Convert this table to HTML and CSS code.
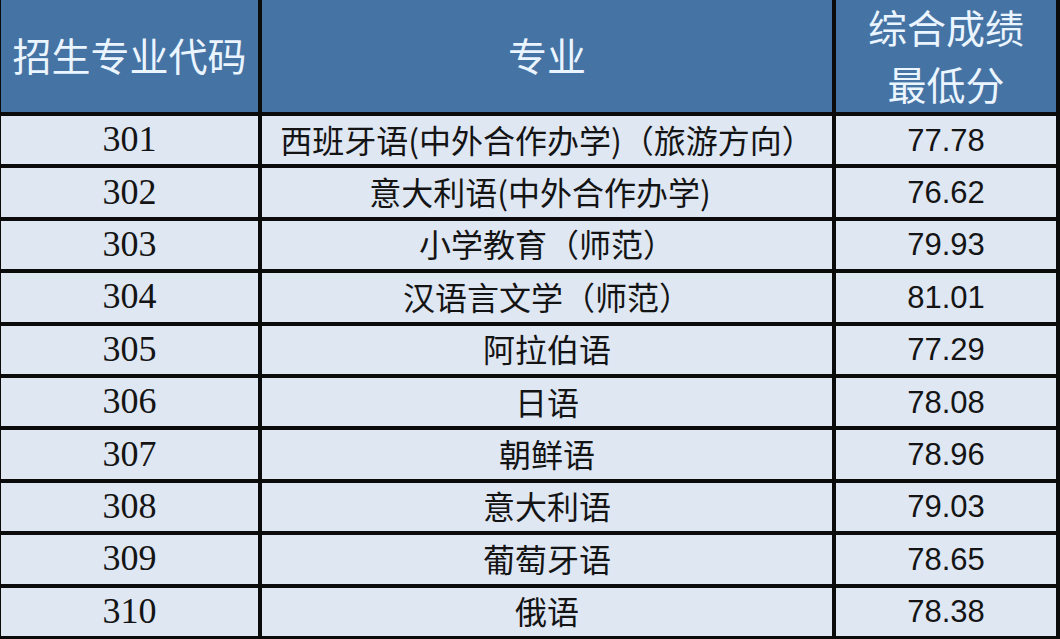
FILE: index.html
```html
<!DOCTYPE html>
<html lang="zh-CN">
<head>
<meta charset="utf-8">
<title>招生专业最低分</title>
<link rel="stylesheet" href="styles.css">
</head>
<body>
<div class="table">
  <div class="cell head">招生专业代码</div>
  <div class="cell head">专业</div>
  <div class="cell head stack"><span>综合成绩</span><span>最低分</span></div>

  <div class="cell code">301</div><div class="cell name">西班牙语(中外合作办学)（旅游方向）</div><div class="cell score">77.78</div>
  <div class="cell code">302</div><div class="cell name long">意大利语(中外合作办学)</div><div class="cell score">76.62</div>
  <div class="cell code">303</div><div class="cell name">小学教育（师范）</div><div class="cell score">79.93</div>
  <div class="cell code">304</div><div class="cell name">汉语言文学（师范）</div><div class="cell score">81.01</div>
  <div class="cell code">305</div><div class="cell name">阿拉伯语</div><div class="cell score">77.29</div>
  <div class="cell code">306</div><div class="cell name">日语</div><div class="cell score">78.08</div>
  <div class="cell code">307</div><div class="cell name">朝鲜语</div><div class="cell score">78.96</div>
  <div class="cell code">308</div><div class="cell name">意大利语</div><div class="cell score">79.03</div>
  <div class="cell code">309</div><div class="cell name">葡萄牙语</div><div class="cell score">78.65</div>
  <div class="cell code">310</div><div class="cell name">俄语</div><div class="cell score">78.38</div>
</div>
</body>
</html>
```
FILE: styles.css
```css
html, body {
  margin: 0;
  padding: 0;
  background: #0b0b0b;
}
.table {
  box-sizing: border-box;
  width: 1060px;
  height: 639px;
  background: #0b0b0b;
  padding: 0 4px 3px 1px;
  display: grid;
  grid-template-columns: 257px 570px 220px;
  grid-template-rows: 112px repeat(10, minmax(0, 1fr));
  gap: 4px;
  overflow: hidden;
}
.cell {
  box-sizing: border-box;
  min-height: 0;
  display: flex;
  align-items: center;
  justify-content: center;
  text-align: center;
  background: #dfe7f3;
  color: #141414;
  white-space: nowrap;
  line-height: 1;
}
.head {
  background: #4573a4;
  color: #eaf5ff;
  font-family: "Noto Sans CJK SC", "Noto Sans", sans-serif;
  font-size: 39px;
  padding-bottom: 4px;
}
.head.stack {
  flex-direction: column;
  gap: 18px;
  padding-bottom: 2px;
}
.code {
  font-family: "Liberation Serif", "Noto Sans CJK SC", serif;
  font-size: 36px;
  padding-bottom: 2px;
}
.name {
  font-family: "Noto Sans CJK SC", "Noto Sans", sans-serif;
  font-size: 32px;
  padding-bottom: 3px;
}
.name.long {
  padding-right: 14px;
}
.score {
  font-family: "Liberation Sans", "Noto Sans CJK SC", sans-serif;
  font-size: 31px;
}
```
